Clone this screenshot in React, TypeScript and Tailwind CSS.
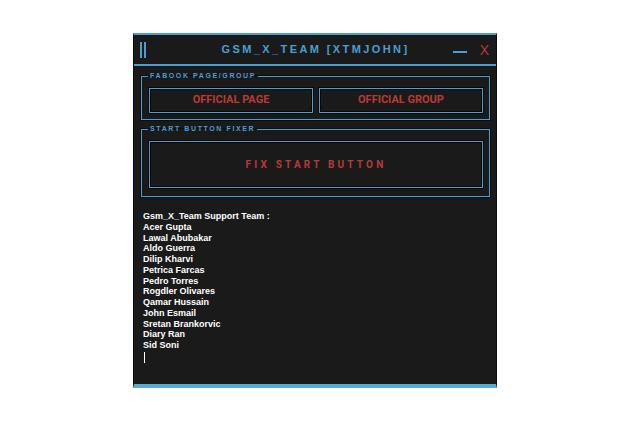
const TEAM = [
  'Acer Gupta',
  'Lawal Abubakar',
  'Aldo Guerra',
  'Dilip Kharvi',
  'Petrica Farcas',
  'Pedro Torres',
  'Rogdler Olivares',
  'Qamar Hussain',
  'John Esmail',
  'Sretan Brankorvic',
  'Diary Ran',
  'Sid Soni',
]

const GroupBox = ({ label, children }: { label: string; children: React.ReactNode }) => (
  <fieldset className="mx-[7px] w-[349px] border border-[#4b9fcf] pl-[7px] pr-[6px] shadow-[0_0_0_1px_#0c0c0c]">
    <legend className="ml-[-1px] px-[2px] font-['Liberation_Sans',sans-serif] text-[7px] font-bold leading-[8px] tracking-[1.6px] text-[#4b9fcf]">
      {label}
    </legend>
    {children}
  </fieldset>
)

const btn =
  "flex items-center justify-center border border-[#4b9fcf] bg-[#1a1a1a] font-['Roboto',sans-serif] font-bold text-[#b93a35] shadow-[inset_0_0_0_1px_#080808,0_0_0_1px_#080808]"

export default function App() {
  return (
    <div className="h-[427px] w-[640px] bg-white pl-[133px] pt-[33px]">
      <div className="flex h-[355px] w-[364px] flex-col border-x border-t-2 border-b-[4px] border-x-[#0a0a0a] border-t-[#4b9fcf] border-b-[#5aaad6] bg-[#1a1a1a]">
        {/* title bar */}
        <div className="grid h-[31px] shrink-0 grid-cols-[1fr_auto_1fr] items-center border-b-2 border-[#4b9fcf]">
          <div className="flex gap-[2px] pl-[6px]">
            <span className="h-[16px] w-[2px] bg-[#4b9fcf]" />
            <span className="h-[16px] w-[2px] bg-[#4b9fcf]" />
          </div>
          <div className="pl-[1px] font-['Liberation_Sans',sans-serif] text-[11px] font-bold tracking-[2.4px] text-[#4b9fcf]">
            GSM_X_TEAM [XTMJOHN]
          </div>
          <div className="flex items-center justify-end pr-[7px]">
            <span className="mt-[4px] h-[2px] w-[14px] bg-[#4b9fcf]" />
            <span className="ml-[13px] font-['Liberation_Sans',sans-serif] text-[14px] leading-none text-[#b93a35]">
              X
            </span>
          </div>
        </div>

        <div className="mt-[6px]">
          <GroupBox label="FABOOK PAGE/GROUP">
            <div className="grid grid-cols-2 gap-[6px] pb-[6px] pt-[8px]">
              <button type="button" className={`${btn} h-[25px] text-[11px]`}>
                OFFICIAL PAGE
              </button>
              <button type="button" className={`${btn} h-[25px] text-[11px]`}>
                OFFICIAL GROUP
              </button>
            </div>
          </GroupBox>
        </div>

        <div className="mt-[5px]">
          <GroupBox label="START BUTTON FIXER">
            <div className="pb-[8px] pt-[8px]">
              <button type="button" className={`${btn} h-[47px] w-full text-[10px] tracking-[3.2px]`}>
                FIX START BUTTON
              </button>
            </div>
          </GroupBox>
        </div>

        <div className="mt-[14px] pl-[9px] font-['Liberation_Sans',sans-serif] text-[9px] font-bold leading-[10.75px] text-white">
          <div>Gsm_X_Team Support Team :</div>
          {TEAM.map((n) => (
            <div key={n}>{n}</div>
          ))}
          <div className="ml-[1px] mt-px h-[11px] w-px bg-white" />
        </div>
      </div>
    </div>
  )
}
